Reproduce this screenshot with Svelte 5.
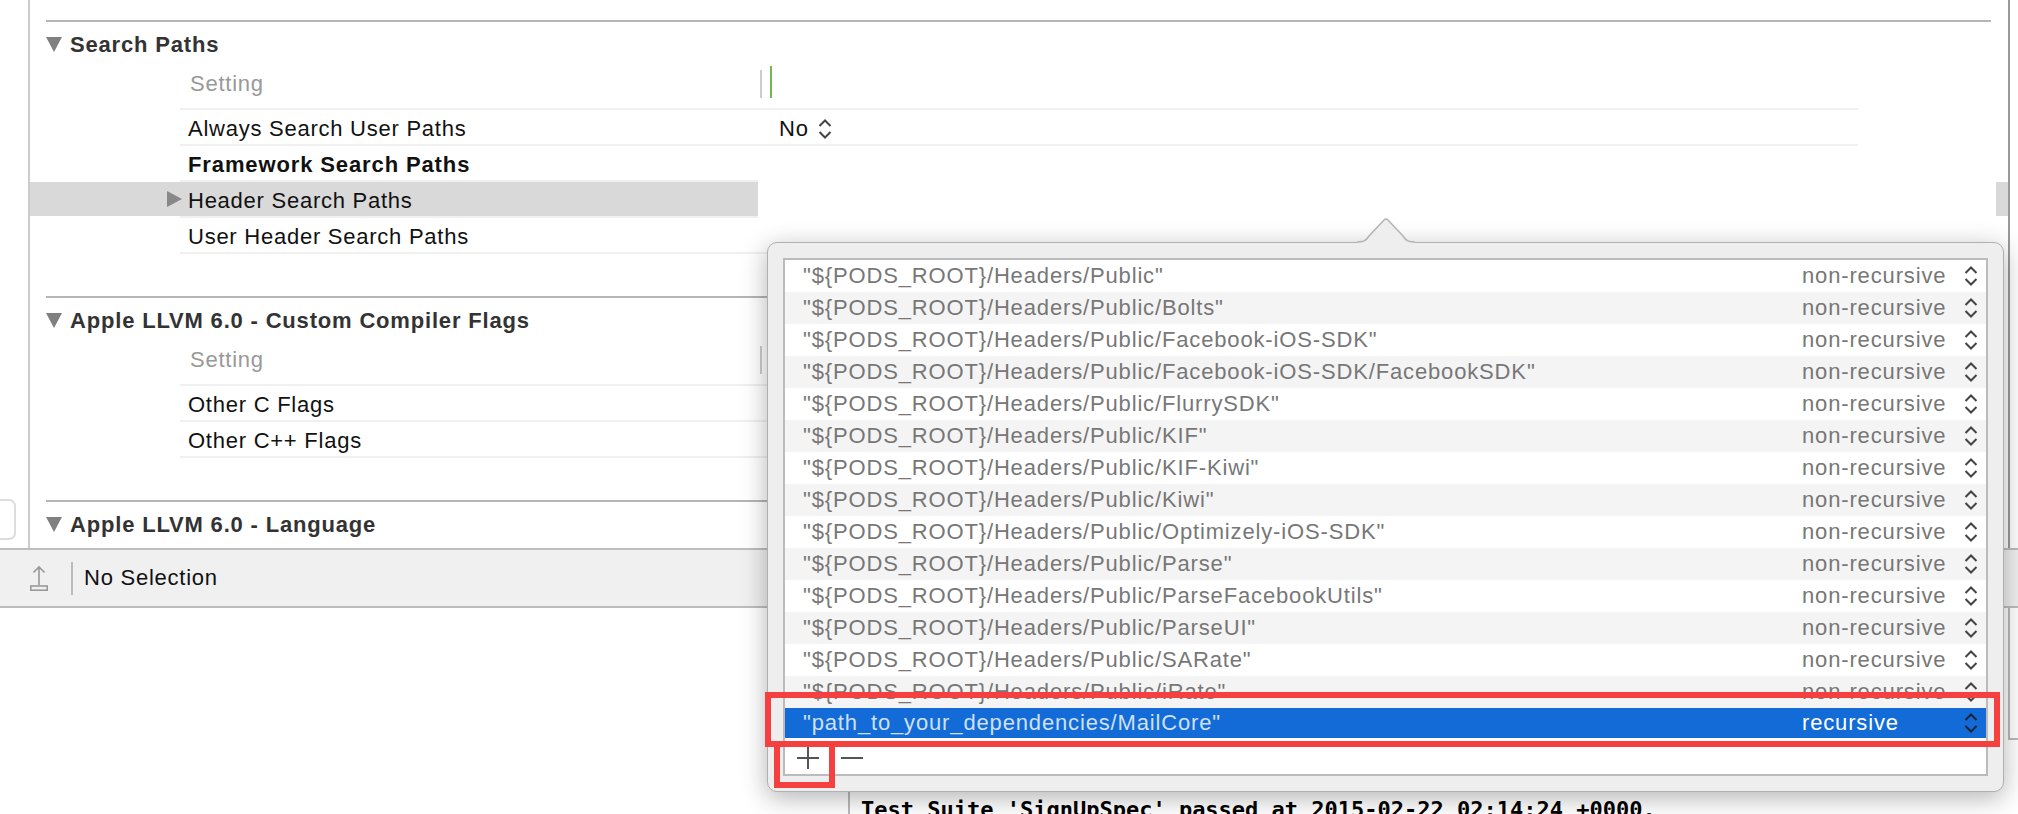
<script>
  const pods = "${PODS_ROOT}/Headers/Public";
  const paths = [
    `"${pods}"`,
    `"${pods}/Bolts"`,
    `"${pods}/Facebook-iOS-SDK"`,
    `"${pods}/Facebook-iOS-SDK/FacebookSDK"`,
    `"${pods}/FlurrySDK"`,
    `"${pods}/KIF"`,
    `"${pods}/KIF-Kiwi"`,
    `"${pods}/Kiwi"`,
    `"${pods}/Optimizely-iOS-SDK"`,
    `"${pods}/Parse"`,
    `"${pods}/ParseFacebookUtils"`,
    `"${pods}/ParseUI"`,
    `"${pods}/SARate"`,
    `"${pods}/iRate"`
  ];
</script>

{#snippet stepper()}
  <svg class="stepper" width="14" height="20" viewBox="0 0 14 20">
    <path d="M1.5 7 L7 1.5 L12.5 7 M1.5 13 L7 18.5 L12.5 13" fill="none" stroke="currentColor" stroke-width="2" />
  </svg>
{/snippet}

{#snippet sectionTitle(text)}
  <div class="section-title">
    <svg width="16" height="16" viewBox="0 0 16 16"><polygon points="0,0 16,0 8,15" fill="#808080" /></svg>
    <span>{text}</span>
  </div>
{/snippet}

<div class="page">
  <div class="editor">
    <div class="gutter"><div class="filter-box"></div></div>

    <div class="panel">
      <div class="scroll-mark"></div>

      <section class="section">
        {@render sectionTitle("Search Paths")}
        <div class="table">
          <div class="head">
            <span class="head-name">Setting</span>
            <i class="divider"></i>
            <i class="divider green"></i>
          </div>
          <div class="row">
            <div class="name">Always Search User Paths</div>
            <div class="value">No {@render stepper()}</div>
          </div>
          <div class="row short">
            <div class="name bold">Framework Search Paths</div>
          </div>
          <div class="row short">
            <div class="name selected">
              <svg width="15" height="16" viewBox="0 0 15 16"><polygon points="0,0 15,8 0,16" fill="#888" /></svg>
              <span>Header Search Paths</span>
            </div>
          </div>
          <div class="row">
            <div class="name">User Header Search Paths</div>
          </div>
        </div>
      </section>

      <section class="section">
        {@render sectionTitle("Apple LLVM 6.0 - Custom Compiler Flags")}
        <div class="table">
          <div class="head">
            <span class="head-name">Setting</span>
            <i class="divider"></i>
          </div>
          <div class="row"><div class="name">Other C Flags</div></div>
          <div class="row"><div class="name">Other C++ Flags</div></div>
        </div>
      </section>

      <section class="section">
        {@render sectionTitle("Apple LLVM 6.0 - Language")}
      </section>
    </div>
  </div>

  <div class="bar">
    <svg class="share" width="18" height="26" viewBox="0 0 18 26">
      <path d="M9 20 V2 M3.5 7.5 L9 2 L14.5 7.5" fill="none" stroke="#999" stroke-width="1.6" />
      <rect x="0.8" y="21" width="16.4" height="4.2" fill="none" stroke="#999" stroke-width="1.6" />
    </svg>
    <i class="bar-divider"></i>
    <span>No Selection</span>
  </div>

  <div class="lower">
    <div class="console">
      <div>(0.000 seconds)</div>
      <div>Test Suite 'SignUpSpec' passed at 2015-02-22 02:14:24 +0000.</div>
    </div>
    <div class="side"></div>
  </div>

  <!-- popover over the build settings -->
  <div class="popover">
    <svg class="arrow" width="60" height="26" viewBox="0 0 60 26">
      <path d="M0 24 C6 24 9 23 12 18 L27 2 Q29 0 31 2 L46 18 C49 23 52 24 58 24 V26 H0 Z" fill="#eee" />
      <path d="M0 24 C6 24 9 23 12 18 L27 2 Q29 0 31 2 L46 18 C49 23 52 24 58 24" fill="none" stroke="#b4b4b4" stroke-width="1.5" />
    </svg>
    <div class="list">
      {#each paths as path}
        <div class="path-row">
          <span class="path">{path}</span>
          <span class="kind">non-recursive</span>
          {@render stepper()}
        </div>
      {/each}
      <div class="path-row active">
        <span class="path">"path_to_your_dependencies/MailCore"</span>
        <span class="kind">recursive</span>
        {@render stepper()}
      </div>
      <div class="tools">
        <svg width="22" height="22" viewBox="0 0 22 22"><path d="M11 0 V22 M0 11 H22" stroke="#555" stroke-width="2" /></svg>
        <svg width="22" height="22" viewBox="0 0 22 22"><path d="M0 11 H22" stroke="#555" stroke-width="2" /></svg>
      </div>
    </div>
  </div>

  <!-- red annotations drawn on top of the screenshot -->
  <div class="mark mark-row"></div>
  <div class="mark mark-plus"></div>
</div>

<style>
  :global(body) {
    margin: 0;
    background: #fff;
  }

  .page {
    position: relative;
    width: 2018px;
    height: 814px;
    overflow: hidden;
    font-family: "Liberation Sans", Arial, sans-serif;
    font-size: 22px;
    letter-spacing: 0.75px;
    color: #111;
  }

  .editor {
    display: flex;
    height: 548px;
  }

  .gutter {
    flex: 0 0 28px;
    display: flex;
    flex-direction: column;
    justify-content: flex-end;
    padding-bottom: 8px;
    box-sizing: border-box;
  }

  .filter-box {
    width: 16px;
    height: 41px;
    box-sizing: border-box;
    border: 2px solid #ddd;
    border-left: none;
    border-radius: 0 7px 7px 0;
  }

  .panel {
    position: relative;
    width: 1982px;
    box-sizing: border-box;
    padding: 20px 0 0 16px;
    border-left: 2px solid #ccc;
    border-right: 2px solid #999;
    overflow: hidden;
  }

  .scroll-mark {
    position: absolute;
    top: 182px;
    right: 0;
    width: 12px;
    height: 34px;
    background: #d9d9d9;
  }

  .section {
    width: 1945px;
    border-top: 2px solid #b5b5b5;
    padding-bottom: 42px;
  }

  .section-title {
    display: flex;
    align-items: center;
    gap: 8px;
    height: 44px;
    font-weight: bold;
    letter-spacing: 0.82px;
    color: #333;
  }

  .section-title svg {
    margin-top: 1px;
  }

  .section-title span {
    padding-top: 2px;
  }

  .table {
    margin-left: 134px;
    width: 1678px;
  }

  .head {
    display: flex;
    align-items: flex-end;
    height: 44px;
    box-sizing: border-box;
    padding: 0 0 10px 10px;
    border-bottom: 2px solid #f0f0f0;
    color: #999;
  }

  .head-name {
    width: 570px;
    line-height: 28px;
  }

  .divider {
    width: 2px;
    height: 28px;
    background: #ccc;
  }

  .divider.green {
    height: 32px;
    margin-left: 8px;
    background: #72b84c;
  }

  .row {
    display: flex;
    height: 36px;
    box-sizing: border-box;
    border-bottom: 2px solid #f0f0f0;
  }

  .row.short {
    width: 578px;
  }

  .name {
    flex: 0 0 570px;
    padding: 2px 0 0 8px;
    line-height: 34px;
  }

  .bold {
    font-weight: bold;
    letter-spacing: 0.88px;
  }

  .selected {
    display: flex;
    align-items: center;
    flex-basis: 728px;
    box-sizing: border-box;
    margin-left: -150px;
    padding: 0 0 0 137px;
    gap: 6px;
    background: #d9d9d9;
  }

  .selected span {
    padding-top: 3px;
  }

  .value {
    display: flex;
    align-items: center;
    gap: 9px;
    padding: 4px 0 0 21px;
  }

  .stepper {
    flex: none;
    color: #444;
  }

  .bar {
    display: flex;
    align-items: center;
    height: 60px;
    box-sizing: border-box;
    padding-left: 30px;
    background: #f0f0f0;
    border-top: 2px solid #bdbdbd;
    border-bottom: 2px solid #bdbdbd;
  }

  .bar-divider {
    width: 2px;
    height: 33px;
    margin: 0 11px 0 23px;
    background: #bbb;
  }

  .lower {
    display: flex;
    height: 206px;
  }

  .console {
    flex: 1;
    margin-left: 848px;
    padding: 160px 0 0 11px;
    border-left: 2px solid #bbb;
    overflow: hidden;
    font-family: "DejaVu Sans Mono", "Liberation Mono", monospace;
    font-weight: bold;
    font-size: 22px;
    letter-spacing: 0;
    line-height: 26px;
    color: #000;
    white-space: nowrap;
  }

  .console div {
    margin-bottom: 3px;
  }

  .side {
    flex: 0 0 10px;
    box-sizing: border-box;
    height: 132px;
    border-left: 2px solid #bbb;
    border-bottom: 2px solid #bbb;
  }

  .popover {
    position: absolute;
    left: 767px;
    top: 242px;
    width: 1237px;
    height: 550px;
    box-sizing: border-box;
    padding: 15px;
    background: #eee;
    border: 1px solid #b0b0b0;
    border-radius: 10px;
    box-shadow: 0 6px 26px rgba(0, 0, 0, 0.3);
    letter-spacing: 0.85px;
  }

  .arrow {
    position: absolute;
    left: 589px;
    top: -25px;
  }

  .list {
    display: flex;
    flex-direction: column;
    height: 100%;
    box-sizing: border-box;
    background: #fff;
    border: 2px solid #bbb;
  }

  .path-row {
    display: flex;
    align-items: center;
    flex: 0 0 32px;
    padding: 0 8px 0 18px;
    color: #777;
  }

  .path-row:nth-child(even) {
    background: #f4f4f4;
  }

  .path {
    flex: 1;
  }

  .kind {
    width: 162px;
  }

  .path-row.active {
    flex-basis: 30px;
    background: #126bd6;
    color: #cfe0f5;
  }

  .active .kind {
    color: #fff;
  }

  .active .stepper {
    color: #14243f;
  }

  .tools {
    display: flex;
    align-items: center;
    gap: 22px;
    height: 32px;
    margin-top: auto;
    padding-left: 12px;
  }

  .mark {
    position: absolute;
    box-sizing: border-box;
    border: 6px solid #f63f3f;
  }

  .mark-row {
    left: 765px;
    top: 692px;
    width: 1235px;
    height: 55px;
  }

  .mark-plus {
    left: 774px;
    top: 741px;
    width: 61px;
    height: 47px;
    border-top: none;
  }
</style>
